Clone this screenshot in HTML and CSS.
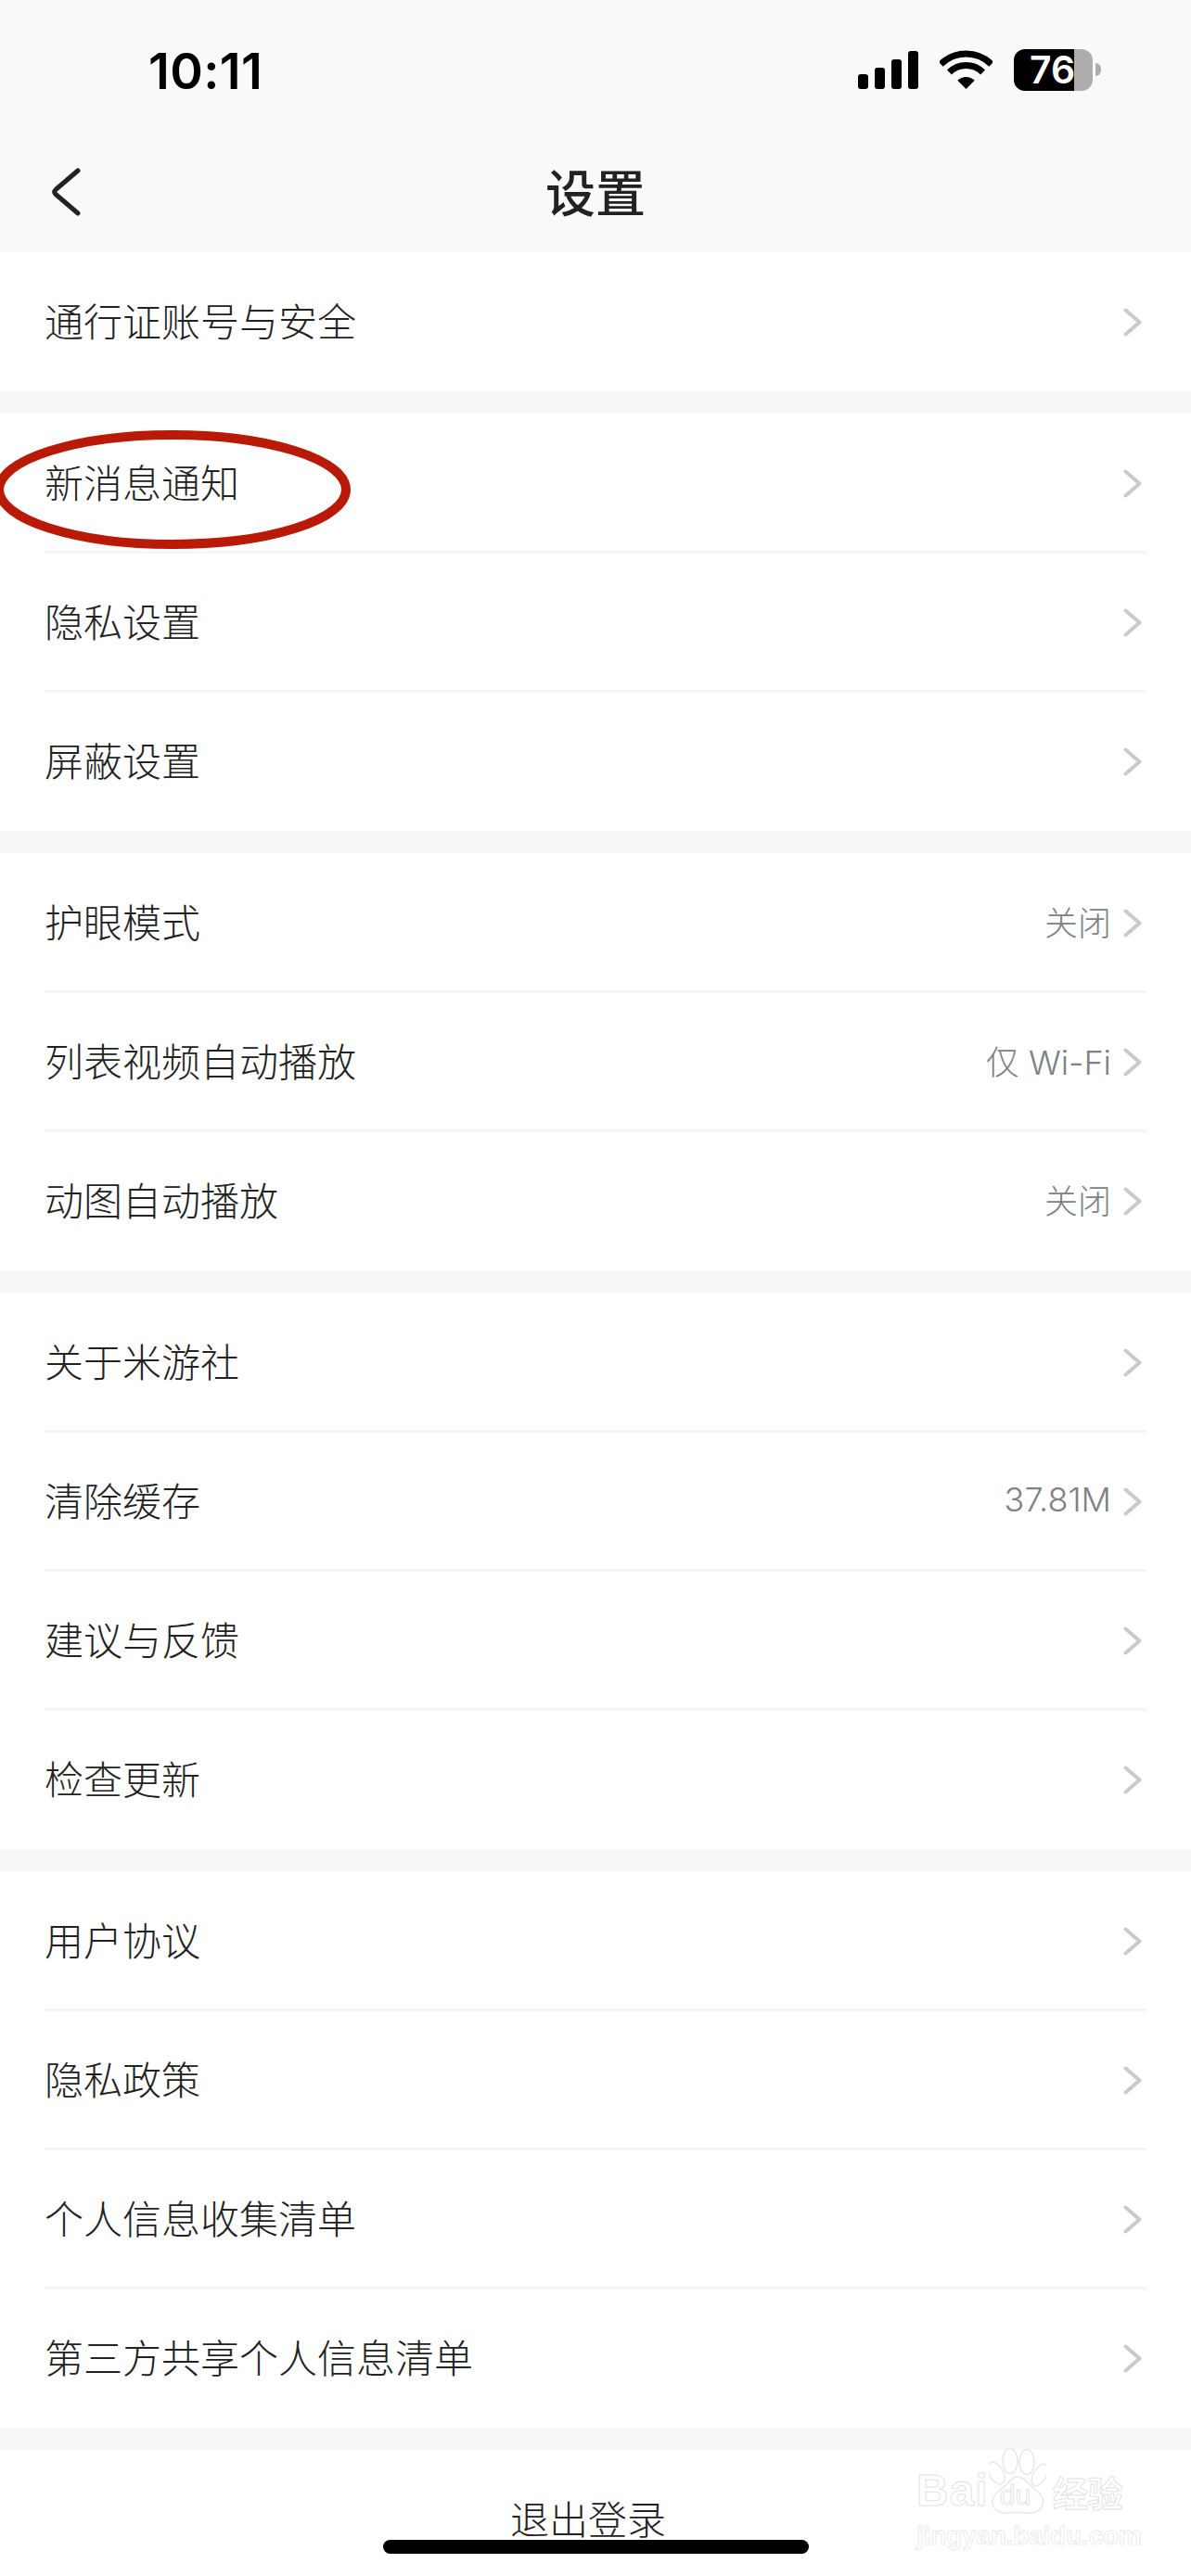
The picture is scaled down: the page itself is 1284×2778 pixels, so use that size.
FILE: index.html
```html
<!DOCTYPE html>
<html lang="zh-CN">
<head>
<meta charset="UTF-8">
<meta name="viewport" content="width=device-width, initial-scale=1.0">
<title>设置</title>
<link rel="stylesheet" href="styles.css">
</head>
<body>
<svg class="defs" width="0" height="0">
    <symbol id="chevron" viewBox="0 0 20 31">
        <path d="M2.5 2.5 L17.5 15.5 L2.5 28.5" fill="none" stroke="#c9cacc" stroke-width="4" stroke-linecap="round" stroke-linejoin="round"/>
    </symbol>
</svg>

<div class="page">
    <header class="header">
        <div class="status">
            <span class="time">10:11</span>
            <div class="status-icons">
                <svg class="signal" width="65" height="41" viewBox="0 0 65 41">
                    <rect x="0" y="25" width="11" height="16" rx="3"/>
                    <rect x="18" y="18" width="11" height="23" rx="3"/>
                    <rect x="36" y="9" width="11" height="32" rx="3"/>
                    <rect x="54" y="0" width="11" height="41" rx="3"/>
                </svg>
                <svg class="wifi" width="57" height="42" viewBox="0 0 57 42">
                    <path d="M1.3 15.2 A38.5 38.5 0 0 1 55.7 15.2" fill="none" stroke="#000" stroke-width="7"/>
                    <path d="M10.5 24 A25.5 25.5 0 0 1 46.5 24" fill="none" stroke="#000" stroke-width="7"/>
                    <path d="M28.5 42 L19.3 32.8 A13 13 0 0 1 37.7 32.8 Z"/>
                </svg>
                <div class="battery"><span>76</span></div>
                <div class="battery-cap"></div>
            </div>
        </div>
        <div class="nav">
            <svg class="back" width="32" height="52" viewBox="0 0 32 52">
                <path d="M29 3 L5 23.5 Q2.500 26 5 28.500 L29 49" fill="none" stroke="#222" stroke-width="5" stroke-linecap="round" stroke-linejoin="round"/>
            </svg>
            <h1 class="title">设置</h1>
        </div>
    </header>

    <section class="group">
        <div class="row"><span>通行证账号与安全</span><svg class="chev"><use href="#chevron"/></svg></div>
    </section>

    <section class="group">
        <div class="row"><span>新消息通知</span><svg class="chev"><use href="#chevron"/></svg></div>
        <div class="row"><span>隐私设置</span><svg class="chev"><use href="#chevron"/></svg></div>
        <div class="row"><span>屏蔽设置</span><svg class="chev"><use href="#chevron"/></svg></div>
    </section>

    <section class="group">
        <div class="row"><span>护眼模式</span><span class="value">关闭</span><svg class="chev"><use href="#chevron"/></svg></div>
        <div class="row"><span>列表视频自动播放</span><span class="value">仅 Wi-Fi</span><svg class="chev"><use href="#chevron"/></svg></div>
        <div class="row"><span>动图自动播放</span><span class="value">关闭</span><svg class="chev"><use href="#chevron"/></svg></div>
    </section>

    <section class="group">
        <div class="row"><span>关于米游社</span><svg class="chev"><use href="#chevron"/></svg></div>
        <div class="row"><span>清除缓存</span><span class="value">37.81M</span><svg class="chev"><use href="#chevron"/></svg></div>
        <div class="row"><span>建议与反馈</span><svg class="chev"><use href="#chevron"/></svg></div>
        <div class="row"><span>检查更新</span><svg class="chev"><use href="#chevron"/></svg></div>
    </section>

    <section class="group">
        <div class="row"><span>用户协议</span><svg class="chev"><use href="#chevron"/></svg></div>
        <div class="row"><span>隐私政策</span><svg class="chev"><use href="#chevron"/></svg></div>
        <div class="row"><span>个人信息收集清单</span><svg class="chev"><use href="#chevron"/></svg></div>
        <div class="row"><span>第三方共享个人信息清单</span><svg class="chev"><use href="#chevron"/></svg></div>
    </section>

    <section class="group logout">退出登录</section>

    <!-- red marker around the notifications row -->
    <svg class="marker" width="380" height="132" viewBox="0 0 380 132">
        <ellipse cx="187" cy="66" rx="187" ry="59" fill="none" stroke="#b91a08" stroke-width="10"/>
    </svg>

    <div class="home-bar"></div>

    <div class="stamp">
        <div class="stamp-top">
            <span class="stamp-bai">Bai</span>
            <div class="paw">
                <svg width="62" height="72" viewBox="0 0 62 72">
                    <g fill="#fff" stroke="#e8e8e8" stroke-width="1.500">
                        <ellipse cx="8" cy="27" rx="7.500" ry="13" transform="rotate(-30 8 27)"/>
                        <ellipse cx="23" cy="14" rx="8" ry="13.500"/>
                        <ellipse cx="41" cy="15" rx="8" ry="13.500"/>
                        <ellipse cx="55" cy="29" rx="7" ry="13" transform="rotate(30 55 29)"/>
                        <path d="M31 31 C38 31 42 38 48 43 C56 49 60 54 58 61 C56 68 48 71 41 70 C35 69 27 69 21 70 C13 71 5 67 4 60 C3 53 8 48 15 43 C21 38 24 31 31 31 Z"/>
                    </g>
                </svg>
                <span class="stamp-du">du</span>
            </div>
            <span class="stamp-jy">经验</span>
        </div>
        <div class="stamp-url">jingyan.baidu.com</div>
    </div>
</div>
</body>
</html>
```

FILE: styles.css
```css
* {
    box-sizing: border-box;
}

body {
    margin: 0;
    background-color: #f8f8f8;
    font-family: "Noto Sans CJK SC", "Noto Sans", sans-serif;
    color: #222;
}

.defs {
    position: absolute;
}

.page {
    position: relative;
    width: 1284px;
    height: 2778px;
    overflow: hidden;
}

/* top area */
.header {
    height: 272px;
    background-color: #f9f9f9;
}

.status {
    height: 152px;
    padding: 53px 97px 0 160px;
    display: flex;
    justify-content: space-between;
    align-items: flex-start;
}

.time {
    font-family: Inter, sans-serif;
    font-size: 54px;
    font-weight: 600;
    line-height: 48px;
    letter-spacing: 0.4px;
    color: #000;
}

.status-icons {
    display: flex;
    align-items: flex-start;
}

.signal {
    margin-top: 2px;
}

.wifi {
    margin-left: 23px;
    margin-top: 1px;
}

.battery {
    margin-left: 23px;
    width: 85px;
    height: 45px;
    border-radius: 12px;
    background: linear-gradient(to right, #000 76%, #adadad 76%);
    color: #fff;
    font-family: Inter, sans-serif;
    font-size: 41px;
    font-weight: 600;
    line-height: 45px;
    padding-left: 17px;
}

.battery-cap {
    margin-left: 3px;
    margin-top: 15px;
    width: 6px;
    height: 14px;
    border-radius: 0 7px 7px 0;
    background-color: #adadad;
}

.nav {
    position: relative;
    height: 120px;
    display: flex;
    justify-content: center;
}

.back {
    position: absolute;
    left: 55px;
    top: 29px;
}

.title {
    margin: 0;
    font-size: 54px;
    font-weight: 500;
    line-height: 120px;
    margin-top: -6px;
}

/* settings list */
.group {
    background-color: #fff;
    margin-bottom: 24px;
}

.row {
    height: 150px;
    margin: 0 48px;
    padding-bottom: 5px;
    display: flex;
    align-items: center;
    gap: 12px;
    font-size: 42px;
    font-weight: 300;
}

.row:not(:last-child) {
    box-shadow: inset 0 -2px 0 #f5f5f5, 0 1px 0 #f5f5f5;
}

.row > span:first-child {
    margin-right: auto;
}

.value {
    font-family: Inter, "Noto Sans CJK SC", sans-serif;
    font-size: 36px;
    font-weight: 300;
    color: #7d8185;
}

.chev {
    width: 20px;
    height: 31px;
    margin: 5px 5px 0 1px;
}

.logout {
    height: 150px;
    margin: 0;
    padding-right: 16px;
    text-align: center;
    font-size: 42px;
    font-weight: 300;
    line-height: 146px;
}

/* things drawn on top */
.marker {
    position: absolute;
    left: -1px;
    top: 462px;
}

.home-bar {
    position: absolute;
    left: 413px;
    top: 2739px;
    width: 459px;
    height: 15px;
    border-radius: 8px;
    background-color: #000;
}

.stamp {
    position: absolute;
    left: 988px;
    top: 2640px;
    width: 230px;
}

.stamp-top {
    display: flex;
    align-items: flex-end;
    height: 72px;
}

.stamp-bai,
.stamp-du,
.stamp-jy,
.stamp-url {
    color: #fff;
    -webkit-text-stroke: 1px #e4e4e4;
}

.stamp-bai {
    font-family: "Liberation Sans", sans-serif;
    font-size: 48px;
    font-weight: 700;
    line-height: 52px;
    letter-spacing: 1px;
}

.paw {
    position: relative;
    width: 62px;
    height: 72px;
    flex-shrink: 0;
}

.stamp-du {
    position: absolute;
    left: 12px;
    top: 34px;
    font-family: "Liberation Sans", sans-serif;
    font-size: 30px;
    line-height: 34px;
}

.stamp-jy {
    font-size: 38px;
    font-weight: 700;
    line-height: 50px;
    margin-left: 7px;
}

.stamp-url {
    font-family: "Liberation Sans", sans-serif;
    font-size: 28px;
    font-weight: 700;
    line-height: 34px;
    margin-top: 6px;
    letter-spacing: -0.2px;
    -webkit-text-stroke-color: #ececec;
}
```
